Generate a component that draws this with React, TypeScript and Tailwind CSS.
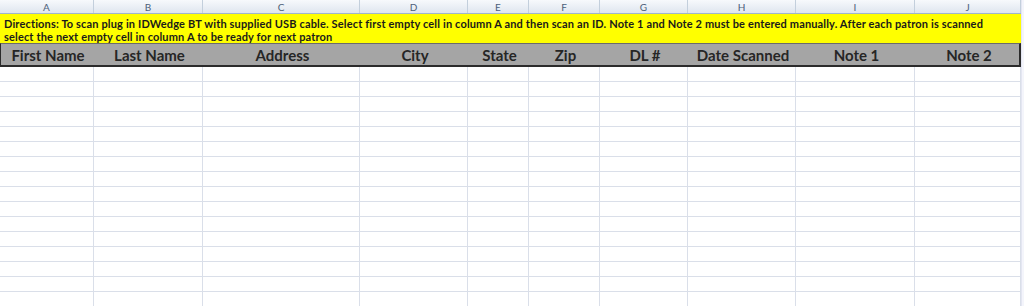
const COLS = ["A", "B", "C", "D", "E", "F", "G", "H", "I", "J"];
const HEADERS = [
  "First Name",
  "Last Name",
  "Address",
  "City",
  "State",
  "Zip",
  "DL #",
  "Date Scanned",
  "Note 1",
  "Note 2",
];
const ROWS = 16;

const grid =
  "grid grid-cols-[94px_109px_157px_108px_61px_71px_88px_108px_119px_106px]";

export default function App() {
  return (
    <div className="h-[306px] w-[1024px] overflow-hidden bg-white font-['Lato','Liberation_Sans',sans-serif]">
      <div className="flex">
        <div className="w-[1021px]">
          {/* column letters */}
          <div className={`${grid} h-[14px] border-b border-[#9fb5cc] bg-gradient-to-b from-[#f7f9fc] to-[#dfe6ef]`}>
            {COLS.map((c) => (
              <div
                key={c}
                className="flex items-center justify-center border-r border-[#c3cfdc] text-[10px] leading-none text-[#4c6079]"
              >
                {c}
              </div>
            ))}
          </div>

          {/* directions */}
          <div className="h-[29px] overflow-hidden bg-[#ffff00] px-[4px] pt-[3px] text-[11px] font-bold leading-[13px] tracking-[0.15px] whitespace-nowrap text-[#1a1a1a]">
            Directions: To scan plug in IDWedge BT with supplied USB cable. Select first empty cell in column A and then scan an ID. Note 1 and Note 2 must be entered manually. After each patron is scanned
            <br />
            select the next empty cell in column A to be ready for next patron
          </div>

          {/* field headers */}
          <div className={`${grid} h-[24px] border-t border-b-2 border-l border-r-2 border-t-[#6b6b6b] border-[#2b2b2b] bg-[#a5a5a5]`}>
            {HEADERS.map((h) => (
              <div
                key={h}
                className="flex items-center justify-center pt-[2px] text-[15px] font-bold leading-none text-[#262626]"
              >
                {h}
              </div>
            ))}
          </div>

          {/* empty cells */}
          {Array.from({ length: ROWS }).map((_, r) => (
            <div key={r} className={`${grid} h-[15px]`}>
              {COLS.map((c) => (
                <div
                  key={c}
                  className="border-r border-b border-[#dadfe9]"
                />
              ))}
            </div>
          ))}
        </div>
        <div className="w-[3px] border-l border-[#e4e6f2] bg-[#f4f5fb]" />
      </div>
    </div>
  );
}
